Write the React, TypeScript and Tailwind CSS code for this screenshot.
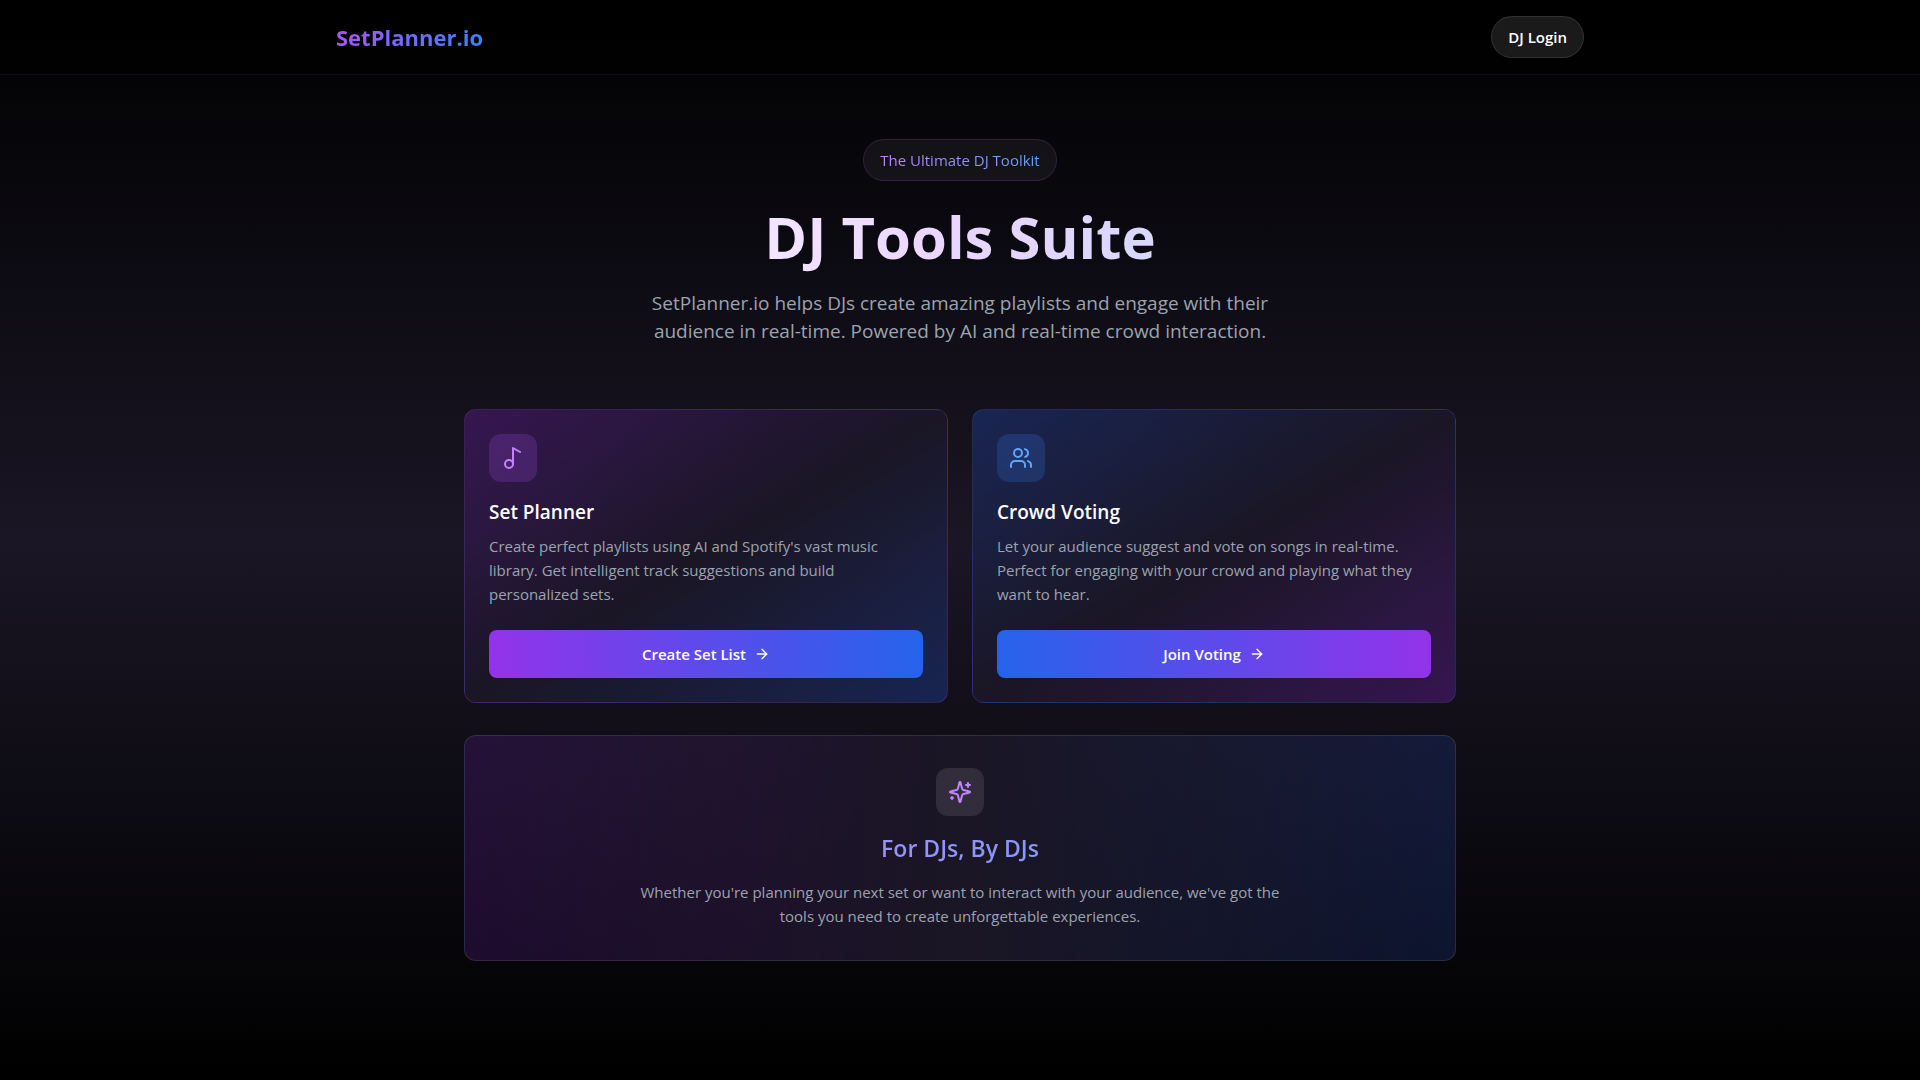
import React from "react";
import { ArrowRight, Users } from "lucide-react";

function NoteIcon() {
  return (
    <svg
      viewBox="0 0 24 24"
      fill="none"
      stroke="currentColor"
      strokeWidth="2"
      strokeLinecap="round"
      strokeLinejoin="round"
      className="size-6"
      aria-hidden="true"
    >
      <circle cx="8" cy="18" r="4" />
      <path d="M12 18V2l7 4" />
    </svg>
  );
}

function SparkleIcon() {
  return (
    <svg
      viewBox="0 0 24 24"
      fill="none"
      stroke="currentColor"
      strokeWidth="2"
      strokeLinecap="round"
      strokeLinejoin="round"
      className="size-6"
      aria-hidden="true"
    >
      <path d="M9.937 15.5A2 2 0 0 0 8.5 14.063l-6.135-1.582a.5.5 0 0 1 0-.962L8.5 9.936A2 2 0 0 0 9.937 8.5l1.582-6.135a.5.5 0 0 1 .963 0L14.063 8.5A2 2 0 0 0 15.5 9.937l6.135 1.581a.5.5 0 0 1 0 .964L15.5 14.063a2 2 0 0 0-1.437 1.437l-1.582 6.135a.5.5 0 0 1-.963 0z" />
      <path d="M20 3v4" />
      <path d="M22 5h-4" />
      <path d="M4 17v2" />
      <path d="M5 18H3" />
    </svg>
  );
}

interface ToolCardProps {
  icon: React.ReactNode;
  title: string;
  text: string;
  action: string;
  cardClass: string;
  iconClass: string;
  buttonClass: string;
}

function ToolCard({ icon, title, text, action, cardClass, iconClass, buttonClass }: ToolCardProps) {
  return (
    <article className={`flex flex-col rounded-xl border p-6 ${cardClass}`}>
      <div className={`mb-4 flex size-12 items-center justify-center rounded-xl ${iconClass}`}>{icon}</div>
      <h2 className="mb-2 text-[19px] leading-7 font-semibold">{title}</h2>
      <p className="mb-6 grow text-[15px] leading-6 text-[#9ca3af]">{text}</p>
      <button
        type="button"
        className={`flex h-12 w-full items-center justify-center gap-2 rounded-lg text-[15px] font-semibold ${buttonClass}`}
      >
        {action}
        <ArrowRight className="size-4" aria-hidden="true" />
      </button>
    </article>
  );
}

export default function App() {
  return (
    <div className="min-h-screen bg-linear-to-b/srgb from-black via-[#1a1625] to-black font-['Segoe_UI','Open_Sans',sans-serif] text-white">
      <header className="border-b border-white/5 bg-black/50">
        <div className="mx-auto flex max-w-7xl items-center justify-between px-4 py-4">
          <a
            href="#"
            className="bg-linear-to-r/srgb from-[#a855f7] to-[#3b82f6] bg-clip-text text-[22px] leading-8 font-bold text-transparent"
          >
            SetPlanner.io
          </a>
          <button
            type="button"
            className="rounded-full border border-white/10 bg-white/10 px-4 py-2 text-[15px] leading-6 font-semibold"
          >
            DJ Login
          </button>
        </div>
      </header>

      <main className="mx-auto max-w-5xl px-4 py-16">
        <section className="mb-16 flex flex-col items-center text-center">
          <div className="mb-6 rounded-full border border-[#a855f7]/20 bg-white/5 px-4 py-2">
            <span className="block bg-linear-to-r/srgb from-[#c084fc] to-[#60a5fa] bg-clip-text text-[15px] leading-6 text-transparent">
              The Ultimate DJ Toolkit
            </span>
          </div>
          <h1 className="mb-3 w-full bg-linear-to-r/srgb from-white via-[#e9d5ff] to-[#bfdbfe] bg-clip-text pb-2 text-[58px] leading-16 font-bold text-transparent">
            DJ Tools Suite
          </h1>
          <p className="max-w-2xl text-[19px] leading-7 text-[#9ca3af]">
            SetPlanner.io helps DJs create amazing playlists and engage with their audience in real-time. Powered by AI
            and real-time crowd interaction.
          </p>
        </section>

        <section className="mb-8 grid grid-cols-2 gap-6">
          <ToolCard
            icon={<NoteIcon />}
            title="Set Planner"
            text="Create perfect playlists using AI and Spotify's vast music library. Get intelligent track suggestions and build personalized sets."
            action="Create Set List"
            cardClass="border-[#a855f7]/20 bg-linear-to-br/srgb from-[#581c87]/50 via-[#1a1625] to-[#1e3a8a]/50"
            iconClass="bg-[#a855f7]/20 text-[#c084fc]"
            buttonClass="bg-linear-to-r/srgb from-[#9333ea] to-[#2563eb]"
          />
          <ToolCard
            icon={<Users className="size-6" aria-hidden="true" />}
            title="Crowd Voting"
            text="Let your audience suggest and vote on songs in real-time. Perfect for engaging with your crowd and playing what they want to hear."
            action="Join Voting"
            cardClass="border-[#3b82f6]/20 bg-linear-to-br/srgb from-[#1e3a8a]/50 via-[#1a1625] to-[#581c87]/50"
            iconClass="bg-[#3b82f6]/20 text-[#60a5fa]"
            buttonClass="bg-linear-to-r/srgb from-[#2563eb] to-[#9333ea]"
          />
        </section>

        <section className="flex flex-col items-center rounded-xl border border-white/10 bg-linear-to-r/srgb from-[#581c87]/30 via-[#1a1625] to-[#1e3a8a]/30 p-8 text-center">
          <div className="mb-4 flex size-12 items-center justify-center rounded-xl bg-white/10 text-[#c084fc]">
            <SparkleIcon />
          </div>
          <h2 className="mb-4 w-full bg-linear-to-r/srgb from-[#c084fc] to-[#60a5fa] bg-clip-text text-[23px] leading-8 font-semibold text-transparent">
            For DJs, By DJs
          </h2>
          <p className="max-w-2xl text-[15px] leading-6 text-[#9ca3af]">
            Whether you're planning your next set or want to interact with your audience, we've got the tools you need
            to create unforgettable experiences.
          </p>
        </section>
      </main>
    </div>
  );
}
